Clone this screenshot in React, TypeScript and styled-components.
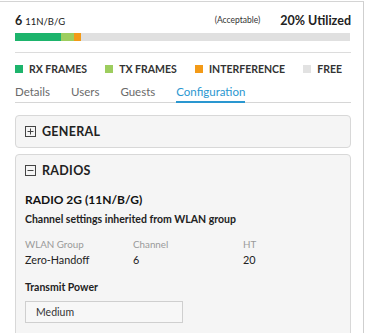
import React from "react";
import styled, { createGlobalStyle } from "styled-components";

const Global = createGlobalStyle`
  html, body { margin: 0; padding: 0; background: #fff; }
  body { font-family: Lato, "Open Sans", sans-serif; color: #222; }
`;

const Panel = styled.div`
  box-sizing: border-box;
  width: 364px;
  height: 332px;
  margin-top: 1px;
  border-top: 1px solid #d4d4d4;
  border-right: 1px solid #cfcfcf;
  padding: 0 12px 0 15px;
  overflow: hidden;
`;

const Header = styled.div`
  display: flex;
  align-items: center;
  justify-content: space-between;
  margin-top: 9px;
  height: 18px;
`;

const Channel = styled.div`
  font-size: 12.5px;
  font-weight: 700;
  color: #222;
  span {
    font-size: 9.5px;
    font-weight: 400;
    margin-left: 3px;
  }
`;

const Status = styled.div`
  display: flex;
  align-items: center;
  gap: 20px;
  font-size: 8.5px;
  color: #333;
  strong {
    font-size: 12.5px;
    font-weight: 700;
    color: #222;
  }
`;

const Bar = styled.div`
  display: flex;
  height: 8px;
  margin-top: 4px;
  width: 335px;
  background: #e0e0e0;
`;

const Seg = styled.div<{ $c: string }>`
  height: 100%;
  background: ${(p) => p.$c};
`;

const Divider = styled.div`
  height: 1px;
  background: #dcdcdc;
  margin-top: 11px;
`;

const Legend = styled.div`
  display: flex;
  justify-content: space-between;
  padding-right: 9px;
  margin-top: 9px;
  height: 14px;
`;

const LegendItem = styled.div`
  display: flex;
  align-items: center;
  gap: 6px;
  font-size: 10.5px;
  font-weight: 700;
  color: #333;
`;

const Swatch = styled.div<{ $c: string }>`
  width: 8px;
  height: 8px;
  background: ${(p) => p.$c};
`;

const Tabs = styled.div`
  display: flex;
  gap: 21px;
  margin-top: 8px;
  border-bottom: 1px solid #d6d6d6;
`;

const Tab = styled.div<{ $active?: boolean }>`
  font-size: 11.5px;
  line-height: 15px;
  color: ${(p) => (p.$active ? "#2a97d0" : "#6a6a6a")};
  padding-bottom: 2px;
  border-bottom: 2px solid ${(p) => (p.$active ? "#2a97d0" : "transparent")};
  margin-bottom: -1px;
`;

const Card = styled.div`
  box-sizing: border-box;
  border: 1px solid #d8d8d8;
  border-radius: 4px;
  background: #f5f5f5;
  padding: 0 9px;
  margin-top: 12px;
  & + & {
    margin-top: 6px;
  }
`;

const CardHead = styled.div`
  display: flex;
  align-items: center;
  gap: 6px;
  height: 31px;
  font-size: 12.5px;
  font-weight: 700;
  letter-spacing: 0.3px;
  color: #222;
`;

const Toggle = styled.svg`
  width: 11px;
  height: 11px;
  flex: none;
`;

const CardBody = styled.div`
  padding-bottom: 20px;
`;

const RadioTitle = styled.div`
  font-size: 12px;
  line-height: 15px;
  font-weight: 700;
  color: #111;
  margin-top: 6px;
`;

const Note = styled.div`
  font-size: 10.5px;
  line-height: 14px;
  font-weight: 700;
  color: #222;
  margin-top: 5px;
`;

const Grid = styled.div`
  display: grid;
  grid-template-columns: 108px 110px 100px;
  margin-top: 12px;
  row-gap: 2px;
`;

const Label = styled.div`
  font-size: 9.8px;
  line-height: 13px;
  color: #9a9a9a;
`;

const Value = styled.div`
  font-size: 10.8px;
  line-height: 14px;
  color: #222;
`;

const FieldLabel = styled.div`
  font-size: 10.5px;
  line-height: 14px;
  font-weight: 700;
  color: #222;
  margin-top: 13px;
`;

const Select = styled.div`
  box-sizing: border-box;
  width: 158px;
  height: 22px;
  margin-top: 7px;
  border: 1px solid #cfcfcf;
  background: #f7f7f7;
  font-size: 10.5px;
  color: #333;
  padding-left: 10px;
  display: flex;
  align-items: center;
`;

const PlusIcon = () => (
  <Toggle viewBox="0 0 11 11">
    <rect x="0.5" y="0.5" width="10" height="10" fill="none" stroke="#444" strokeWidth="1" />
    <line x1="2.5" y1="5.5" x2="8.5" y2="5.5" stroke="#444" strokeWidth="1" />
    <line x1="5.5" y1="2.5" x2="5.5" y2="8.5" stroke="#444" strokeWidth="1" />
  </Toggle>
);

const MinusIcon = () => (
  <Toggle viewBox="0 0 11 11">
    <rect x="0.5" y="0.5" width="10" height="10" fill="none" stroke="#444" strokeWidth="1" />
    <line x1="2.5" y1="5.5" x2="8.5" y2="5.5" stroke="#444" strokeWidth="1" />
  </Toggle>
);

const segments = [
  { c: "#1db46c", w: 46 },
  { c: "#9dcd5e", w: 13 },
  { c: "#f39a17", w: 7 },
];

const legend = [
  { c: "#1db46c", t: "RX FRAMES" },
  { c: "#9dcd5e", t: "TX FRAMES" },
  { c: "#f39a17", t: "INTERFERENCE" },
  { c: "#e2e2e2", t: "FREE" },
];

export default function App() {
  return (
    <>
      <Global />
      <Panel>
        <Header>
          <Channel>
            6<span>11N/B/G</span>
          </Channel>
          <Status>
            <span>(Acceptable)</span>
            <strong>20% Utilized</strong>
          </Status>
        </Header>
        <Bar>
          {segments.map((s, i) => (
            <Seg key={i} $c={s.c} style={{ width: s.w }} />
          ))}
        </Bar>
        <Divider />
        <Legend>
          {legend.map((l) => (
            <LegendItem key={l.t}>
              <Swatch $c={l.c} />
              {l.t}
            </LegendItem>
          ))}
        </Legend>
        <Tabs>
          <Tab>Details</Tab>
          <Tab>Users</Tab>
          <Tab>Guests</Tab>
          <Tab $active>Configuration</Tab>
        </Tabs>
        <Card>
          <CardHead>
            <PlusIcon />
            GENERAL
          </CardHead>
        </Card>
        <Card>
          <CardHead>
            <MinusIcon />
            RADIOS
          </CardHead>
          <CardBody>
            <RadioTitle>RADIO 2G (11N/B/G)</RadioTitle>
            <Note>Channel settings inherited from WLAN group</Note>
            <Grid>
              <Label>WLAN Group</Label>
              <Label>Channel</Label>
              <Label>HT</Label>
              <Value>Zero-Handoff</Value>
              <Value>6</Value>
              <Value>20</Value>
            </Grid>
            <FieldLabel>Transmit Power</FieldLabel>
            <Select>Medium</Select>
          </CardBody>
        </Card>
      </Panel>
    </>
  );
}
